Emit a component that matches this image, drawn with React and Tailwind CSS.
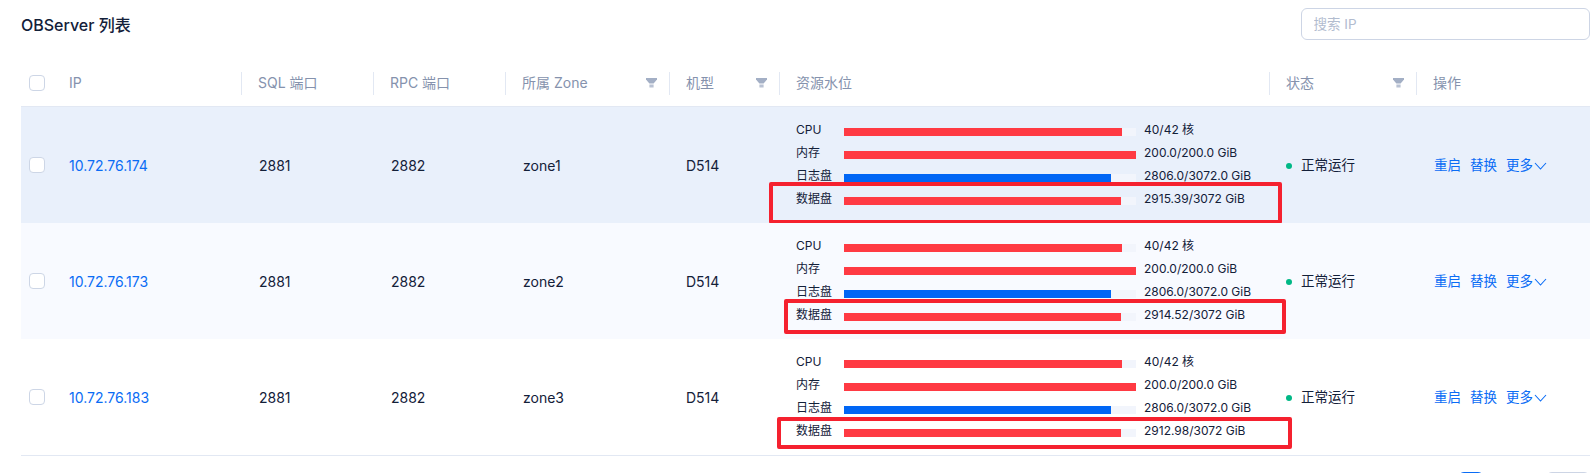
import React from "react";

const cols = "grid grid-cols-[32px_189px_132px_132px_164px_110px_490px_147px_173px]";

function Funnel() {
  return (
    <svg width="11" height="10" viewBox="0 0 11 10" className="shrink-0">
      <path d="M0 0H11V1.5L7.6 5.5H3.4L0 1.5Z" fill="#a3afc5" />
      <rect x="3.4" y="6.5" width="4.2" height="3" fill="#b9c2d3" />
    </svg>
  );
}

function Check() {
  return <span className="block w-4 h-4 rounded-[4px] border border-[#cdd6e6] bg-white" />;
}

function Head({ label, filter, last }) {
  return (
    <div className={`h-[23px] flex items-center justify-between pl-[16px] pr-3 ${last ? "" : "border-r border-[#e2e8f3]"}`}>
      <span>{label}</span>
      {filter && <Funnel />}
    </div>
  );
}

function Meter({ label, pct, blue, value }) {
  return (
    <div className="flex items-start h-[23px] leading-5">
      <span className="w-12">{label}</span>
      <div className="w-[292px] h-2 mt-2 bg-[#f2f5fc]">
        <div className={`h-full ${blue ? "bg-[#0066f5]" : "bg-[#ff3a43]"}`} style={{ width: pct + "%" }} />
      </div>
      <span className="ml-2">{value}</span>
    </div>
  );
}

const rows = [
  { ip: "10.72.76.174", zone: "zone1", disk: "2915.39/3072 GiB", bg: "bg-[#e9f0fb]", box: "left-[748px] top-[75px] w-[513px] h-[42px]" },
  { ip: "10.72.76.173", zone: "zone2", disk: "2914.52/3072 GiB", bg: "bg-[#f8faff]", box: "left-[763px] top-[76px] w-[502px] h-[35px]" },
  { ip: "10.72.76.183", zone: "zone3", disk: "2912.98/3072 GiB", bg: "bg-white", box: "left-[756px] top-[78px] w-[515px] h-[32px]" },
];

function Row({ r }) {
  return (
    <div className={`${cols} relative h-[116px] items-center text-sm text-[#132039] ${r.bg}`}>
      <div className="pl-2"><Check /></div>
      <div className="pl-4 pt-px text-[#0a6cf5]">{r.ip}</div>
      <div className="pl-[17px] pt-px">2881</div>
      <div className="pl-[17px] pt-px">2882</div>
      <div className="pl-[17px] pt-px">{r.zone}</div>
      <div className="pl-[16px] pt-px">D514</div>
      <div className="self-start pl-[16px] pt-[13px] text-xs">
        <Meter label="CPU" pct={95.2} value="40/42 核" />
        <Meter label="内存" pct={100} value="200.0/200.0 GiB" />
        <Meter label="日志盘" pct={91.3} blue value="2806.0/3072.0 GiB" />
        <Meter label="数据盘" pct={94.9} value={r.disk} />
      </div>
      <div className="pl-[16px] pt-px flex items-center gap-[9px]">
        <span className="w-[6px] h-[6px] rounded-full bg-[#00b886]" />
        <span className="text-[13.5px]">正常运行</span>
      </div>
      <div className="pl-[17px] pt-px flex items-center gap-[9px] text-[13.5px] text-[#0a6cf5]">
        <span>重启</span>
        <span>替换</span>
        <span className="flex items-center">
          更多
          <svg width="13" height="8" viewBox="0 0 13 8" className="ml-[1px]" fill="none" stroke="#0a6cf5" strokeWidth="1.1">
            <path d="M1 1L6.5 7L12 1" />
          </svg>
        </span>
      </div>
      <div className={`absolute border-4 border-[#f5212f] rounded-[2px] ${r.box}`} />
    </div>
  );
}

export default function App() {
  return (
    <div className="w-[1590px] h-[473px] overflow-hidden bg-white pl-[21px] [font-family:Inter,'Noto_Sans_CJK_SC',sans-serif]">
      <div className="h-[60px] flex justify-between pt-2">
        <h1 className="mt-1 pt-px text-base leading-6 font-medium text-[#132039]">OBServer 列表</h1>
        <input
          placeholder="搜索 IP"
          className="w-[289.5px] h-8 px-3 border border-[#cdd5e5] rounded-md text-[13.5px] placeholder:text-[#b2bccf] outline-none"
        />
      </div>
      <div className={`${cols} h-[47px] items-center border-b border-[#e2e8f3] text-sm text-[#8592ad]`}>
        <div className="pl-2"><Check /></div>
        <Head label="IP" />
        <Head label="SQL 端口" />
        <Head label="RPC 端口" />
        <Head label="所属 Zone" filter />
        <Head label="机型" filter />
        <Head label="资源水位" />
        <Head label="状态" filter />
        <Head label="操作" last />
      </div>
      {rows.map((r) => <Row key={r.ip} r={r} />)}
      <div className="border-t border-[#e2e8f3] pt-4 flex justify-end gap-[62px]">
        <div className="w-[26px] h-[26px] border border-[#0a6cf5] rounded-md" />
        <div className="w-[44px] h-[26px] border border-[#cdd5e5] rounded-md" />
      </div>
    </div>
  );
}
